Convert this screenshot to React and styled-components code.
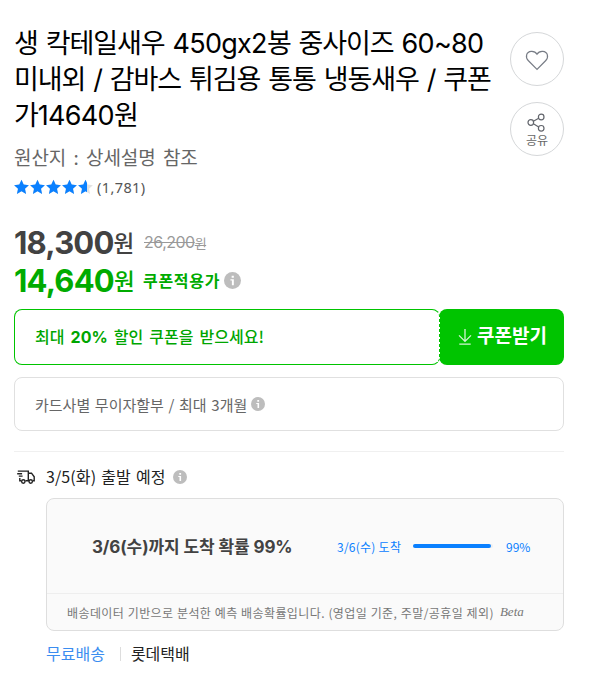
import React from "react";
import styled, { createGlobalStyle } from "styled-components";

const GlobalStyle = createGlobalStyle`
  * {
    box-sizing: border-box;
  }
  body {
    margin: 0;
    background: #fff;
    color: #222;
    font-family: "Noto Sans CJK KR", sans-serif;
  }
  button {
    font-family: inherit;
    padding: 0;
    cursor: pointer;
  }
`;

function HeartIcon() {
  return (
    <svg width="24" height="24" viewBox="0 0 24 24" fill="none" stroke="#777c85" strokeWidth="1.2">
      <path d="M12 22.4 3.2 13.5C.2 10.4 1 4.8 6.3 4.4c2.6-.2 4.6 1 5.7 2.8 1.1-1.8 3.1-3 5.7-2.8 5.3.4 6.1 6 3.1 9.1Z" />
    </svg>
  );
}

function ShareIcon() {
  return (
    <svg width="20" height="20" viewBox="0 0 20 20" fill="none" stroke="#62656c" strokeWidth="1.2">
      <circle cx="3.8" cy="10.5" r="2.8" />
      <circle cx="14.2" cy="5" r="2.8" />
      <circle cx="14.2" cy="16.3" r="2.8" />
      <path d="m6.4 9.2 5.3-2.9M6.4 11.8l5.3 3.1" />
    </svg>
  );
}

function Stars() {
  const star = "M8 .8l2.2 4.8 5.2.6-3.9 3.5 1.1 5.2L8 12.3l-4.6 2.6 1.1-5.2L.6 6.2l5.2-.6z";
  return (
    <svg width="79" height="16" viewBox="0 0 79 16">
      <defs>
        <clipPath id="score">
          <rect width="73" height="16" />
        </clipPath>
      </defs>
      {[0, 1, 2, 3, 4].map((i) => (
        <path key={i} d={star} fill="#e2e2e2" transform={`translate(${i * 16 - 0.5} 0)`} />
      ))}
      <g clipPath="url(#score)">
        {[0, 1, 2, 3, 4].map((i) => (
          <path key={i} d={star} fill="#0a80ff" transform={`translate(${i * 16 - 0.5} 0)`} />
        ))}
      </g>
    </svg>
  );
}

function InfoIcon({ size }) {
  return (
    <svg width={size} height={size} viewBox="0 0 14 14">
      <circle cx="7" cy="7" r="7" fill="#bdbdbd" />
      <path d="M6.3 3h1.8v1.7H6.3zM5.3 5.9h2.8V11H6.5V7.1H5.3z" fill="#fff" />
    </svg>
  );
}

function DownloadIcon() {
  return (
    <svg width="14" height="16" viewBox="0 0 14 16" fill="none" stroke="#d4f5d4" strokeWidth="1.3">
      <path d="M7 0v12M1 6.4l6 6 6-6M1.3 15.2h11.4" />
    </svg>
  );
}

function TruckIcon() {
  return (
    <svg width="18" height="14" viewBox="0 0 18 14" fill="none" stroke="#222" strokeWidth="1.4">
      <path d="M.8 1.1h10.5v9.7H8.4M11.3 3.2h3.2l2.7 3.6v4h-1.5M2.8 8v2.8h1.4M9 10.8h2.8M.2 3.7h4.9M1.8 6.1h3.8" />
      <circle cx="6.3" cy="11.5" r="1.7" />
      <circle cx="13.7" cy="11.5" r="1.7" />
    </svg>
  );
}

function App() {
  return (
    <Page>
      <GlobalStyle />
      <Header>
        <Title>
          <TitleLine>
            생 칵테일새우 <Digits>450gx2</Digits>봉 중사이즈 <Digits>60~80</Digits>
          </TitleLine>
          <TitleLine>미내외 / 감바스 튀김용 통통 냉동새우 / 쿠폰</TitleLine>
          <TitleLine>
            가<Digits>14640</Digits>원
          </TitleLine>
        </Title>
        <Actions>
          <RoundButton>
            <HeartIcon />
          </RoundButton>
          <RoundButton>
            <ShareIcon />
            <ShareLabel>공유</ShareLabel>
          </RoundButton>
        </Actions>
      </Header>
      <Origin>원산지 : 상세설명 참조</Origin>
      <Rating>
        <Stars />
        <Count>(1,781)</Count>
      </Rating>

      <PriceRow>
        <Price>
          18,300<Won>원</Won>
        </Price>
        <OldPrice>
          26,200<small>원</small>
        </OldPrice>
      </PriceRow>
      <PriceRow $green>
        <Price>
          14,640<Won>원</Won>
        </Price>
        <CouponLabel>쿠폰적용가</CouponLabel>
        <InfoIcon size={17} />
      </PriceRow>

      <Coupon>
        <CouponText>
          최대 <b>20%</b> 할인 쿠폰을 받으세요!
        </CouponText>
        <CouponButton>
          <DownloadIcon />
          <span>쿠폰받기</span>
        </CouponButton>
      </Coupon>
      <CardBenefit>
        <span>카드사별 무이자할부 / 최대 3개월</span>
        <InfoIcon size={14} />
      </CardBenefit>

      <Delivery>
        <Departure>
          <TruckIcon />
          <DepartureText>3/5(화) 출발 예정</DepartureText>
          <InfoIcon size={14} />
        </Departure>
        <Forecast>
          <ForecastMain>
            <ForecastTitle>3/6(수)까지 도착 확률 99%</ForecastTitle>
            <ForecastDay>3/6(수) 도착</ForecastDay>
            <Track>
              <Bar />
            </Track>
            <Percent>99%</Percent>
          </ForecastMain>
          <ForecastNote>
            <span>배송데이터 기반으로 분석한 예측 배송확률입니다. (영업일 기준, 주말/공휴일 제외)</span>
            <Beta>Beta</Beta>
          </ForecastNote>
        </Forecast>
        <Shipping>
          <Free>무료배송</Free>
          <Divider />
          <Carrier>롯데택배</Carrier>
        </Shipping>
      </Delivery>
    </Page>
  );
}

export default App;

const Page = styled.div`
  width: 564px;
  height: 679px;
  padding: 25px 0 0 14px;
  overflow: hidden;
`;

const Header = styled.div`
  display: flex;
  justify-content: space-between;
  height: 118px;
`;

const Title = styled.h1`
  margin: 0;
  padding-top: 1px;
  font-family: Inter, "Noto Sans CJK KR", sans-serif;
  font-size: 27px;
  font-weight: 400;
  line-height: 36px;
  color: #000;
`;

const TitleLine = styled.span`
  display: block;
  white-space: nowrap;
  letter-spacing: -1.1px;
  word-spacing: 1.5px;
`;

const Digits = styled.span`
  letter-spacing: -0.7px;
`;

const Actions = styled.div`
  display: flex;
  flex-direction: column;
  gap: 16px;
  padding-top: 7px;
`;

const RoundButton = styled.button`
  display: flex;
  flex-direction: column;
  align-items: center;
  justify-content: center;
  flex-shrink: 0;
  width: 54px;
  height: 54px;
  border: 1px solid #d5d7d9;
  border-radius: 50%;
  background: #fff;
`;

const ShareLabel = styled.span`
  font-size: 12px;
  line-height: 15px;
  color: #666;
`;

const Origin = styled.p`
  margin: 0;
  font-size: 19px;
  line-height: 27px;
  letter-spacing: -0.1px;
  word-spacing: 3.2px;
  white-space: nowrap;
  color: #666;
`;

const Rating = styled.div`
  display: flex;
  align-items: center;
  gap: 4px;
  height: 34px;
`;

const Count = styled.span`
  font-family: "Noto Sans", sans-serif;
  font-size: 14.5px;
  letter-spacing: 0.4px;
  line-height: 18px;
  padding-bottom: 1px;
  color: #555;
`;

const PriceRow = styled.div`
  display: flex;
  align-items: center;
  height: 38px;
  margin-top: ${(props) => (props.$green ? "0" : "19px")};
  color: ${(props) => (props.$green ? "#00ab00" : "#424242")};
`;

const Price = styled.strong`
  display: flex;
  align-items: center;
  width: 129px;
  font-family: Inter, sans-serif;
  font-size: 31px;
  font-weight: 700;
  letter-spacing: -0.8px;
  white-space: nowrap;
`;

const Won = styled.span`
  font-family: "Noto Sans CJK KR", sans-serif;
  font-size: 22.5px;
  font-weight: 500;
`;

const OldPrice = styled.del`
  margin-left: 1px;
  font-family: Inter, "Noto Sans CJK KR", sans-serif;
  font-size: 16px;
  letter-spacing: -0.5px;
  color: #999;

  small {
    font-size: 13px;
  }
`;

const CouponLabel = styled.span`
  width: 81px;
  font-size: 16px;
  font-weight: 700;
  letter-spacing: 0.7px;
  white-space: nowrap;
`;

const Coupon = styled.div`
  display: flex;
  height: 56px;
  margin-top: 10px;
`;

const CouponText = styled.div`
  z-index: 1;
  width: 426px;
  padding-left: 20px;
  border: 1px solid #00c400;
  border-right-style: dashed;
  border-radius: 8px;
  background: #fff;
  font-size: 16px;
  font-weight: 500;
  line-height: 53px;
  word-spacing: 2.5px;
  white-space: nowrap;
  color: #00a600;

  b {
    font-family: Inter, sans-serif;
  }
`;

const CouponButton = styled.button`
  display: flex;
  align-items: center;
  justify-content: center;
  gap: 5px;
  width: 125px;
  margin-left: -1px;
  padding-left: 2px;
  border: 0;
  border-radius: 8px;
  background: #00c400;
  color: #fff;
  font-size: 19px;
  font-weight: 700;

  span {
    padding-bottom: 5px;
  }
`;

const CardBenefit = styled.div`
  display: flex;
  align-items: center;
  gap: 4px;
  height: 54px;
  margin-top: 12px;
  padding-left: 20px;
  border: 1px solid #e0e0e0;
  border-radius: 8px;
  font-size: 15px;
  letter-spacing: 0;
  word-spacing: 1.3px;
  color: #666;
`;

const Delivery = styled.div`
  margin-top: 20px;
  border-top: 1px solid #f0f0f0;
`;

const Departure = styled.div`
  display: flex;
  align-items: center;
  height: 46px;
  padding: 4px 0 0 3px;
`;

const DepartureText = styled.span`
  width: 127px;
  margin-left: 11px;
  padding-bottom: 2px;
  font-size: 16px;
  letter-spacing: 0.1px;
  word-spacing: 1.4px;
  white-space: nowrap;
`;

const Forecast = styled.div`
  height: 133px;
  margin-left: 32px;
  border: 1px solid #dedede;
  border-radius: 8px;
  background: #fafafa;
`;

const ForecastMain = styled.div`
  display: flex;
  align-items: center;
  height: 95px;
  padding-left: 45px;
  border-bottom: 1px solid #eee;
  white-space: nowrap;
`;

const ForecastTitle = styled.strong`
  width: 245px;
  padding-bottom: 2px;
  font-family: Inter, "Noto Sans CJK KR", sans-serif;
  font-size: 17px;
  letter-spacing: -0.1px;
  color: #424242;
`;

const ForecastDay = styled.span`
  width: 76px;
  font-size: 12px;
  letter-spacing: 0.25px;
  color: #0a80ff;
`;

const Track = styled.div`
  width: 80px;
  height: 4px;
  border-radius: 2px;
  background: #eee;
`;

const Bar = styled.div`
  width: 98%;
  height: 4px;
  border-radius: 2px;
  background: #0a80ff;
`;

const Percent = styled.span`
  margin-left: 13px;
  font-size: 12px;
  color: #0a80ff;
`;

const ForecastNote = styled.div`
  display: flex;
  align-items: center;
  gap: 6px;
  height: 36px;
  padding-left: 20px;
  font-size: 12px;
  letter-spacing: 0.4px;
  word-spacing: 0.4px;
  white-space: nowrap;
  color: #777;
`;

const Beta = styled.i`
  font-family: "Liberation Serif", serif;
  font-size: 13px;
  letter-spacing: 0;
`;

const Shipping = styled.div`
  display: flex;
  align-items: center;
  height: 44px;
  padding-left: 32px;
  font-size: 16px;
`;

const Free = styled.span`
  color: #3b8df0;
`;

const Divider = styled.i`
  width: 1px;
  height: 14px;
  margin: 2px 10px 0 15px;
  background: #ddd;
`;

const Carrier = styled.span`
  color: #222;
`;
